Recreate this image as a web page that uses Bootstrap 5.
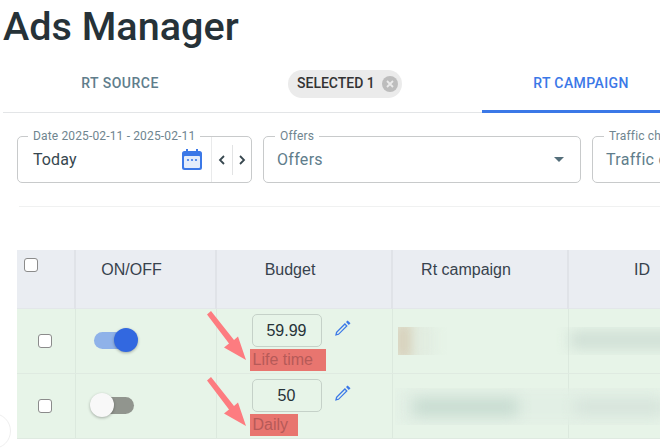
<!DOCTYPE html>
<html lang="en">
<head>
<meta charset="utf-8">
<title>Ads Manager</title>
<link rel="stylesheet" href="https://cdn.jsdelivr.net/npm/bootstrap@5.3.0/dist/css/bootstrap.min.css">
<style>
html,body{height:448px;overflow:hidden;background:#fff}
body{font-family:Roboto,sans-serif;position:relative;width:660px}
.page-title{font-family:Roboto,sans-serif;font-size:39.6px;font-weight:500;line-height:48px;color:#263238;margin:3px 0 0 3px;height:49px}
.tabs-bar{height:60px;margin-left:3px;border-bottom:1px solid #e3e5e7;margin-top:1px;width:700px}
.tab-item{height:60px;font-size:14px;font-weight:500;letter-spacing:.4px;color:#607d8b;flex:none;border-bottom:3px solid transparent;padding-top:3px}
.tab-one{width:234px;letter-spacing:.5px}
.tab-two{width:216px;margin-right:29px;padding-left:51px}
.tab-three{width:198px;color:#3b78e7;border-bottom-color:#3b78e7;margin-bottom:-1px}
.sel-chip{height:28px;width:114px;border-radius:14px;background:#ebebeb;color:#333;padding-left:9px;gap:7px;letter-spacing:0;margin-top:1px}
.sel-chip svg{flex:none}
.filters{padding:23px 0 0 17px;gap:11px;width:800px}
.fld{height:47px;border:1px solid #c8cacb;border-radius:5px;position:relative;flex:none;font-size:16px;letter-spacing:.3px;color:#607d8b;padding-left:13px}
.fld-date{width:235px;color:#37474f;padding-left:15px;letter-spacing:.1px}
.fld-offers{width:318px}
.fld-traffic{width:200px}
.fld-label{position:absolute;top:-8px;left:11px;background:#fff;padding:0 5px;font-size:12px;letter-spacing:.15px;line-height:14px;color:#6f858f;white-space:nowrap}
.fld-date .fld-label{left:10px}
.date-tools{margin-left:auto;height:45px}
.cal-ico{margin-right:9px}
.tool-a{width:21px;height:45px;border-left:1px solid #e9eaeb}
.tool-b{width:19px;height:30px;border-left:1px solid #e2e3e4}
.sel-caret{margin-left:auto;margin-right:16px;width:0;height:0;border-left:5px solid transparent;border-right:5px solid transparent;border-top:5px solid #546e7a}
.rule-line{height:1px;background:#f0f1f1;margin:23px 0 0 19px}
.tbl-wrap{margin:43px 0 0 17px;width:643px;overflow:hidden;position:relative;height:190px}
.data-tbl{table-layout:fixed;width:727px;font-family:"Liberation Sans",Arial,sans-serif;font-size:16px;color:#37424d;margin:0;border-collapse:collapse;--bs-table-bg:transparent}
.data-tbl th{background:#eaedf2;height:58px;vertical-align:top;font-weight:400;text-align:center;padding:8px 28px 0 0;border:0;border-right:2px solid #e0e3e8;border-bottom:1px solid #e3e7ea}
.data-tbl th:first-child{text-align:left;padding:8px 0 0 7px}
.data-tbl td{background:#e7f4e8;height:64px;padding:0;border:0;border-right:1px solid #dce9de;border-bottom:1px solid #dfeae1;vertical-align:middle}
.data-tbl .form-check-input{width:14px;height:14px;margin:0;border:1.5px solid #8b8b8b;border-radius:3px;display:block;float:none;background-color:#fff}
.check-cell .form-check-input{margin-left:21px}
.tgl{position:relative;display:block;width:40px;height:17px;border-radius:9px;margin-left:18px}
.tgl-on{background:#8fb2e9}
.tgl-off{background:#91958e}
.tgl-knob{position:absolute;top:-4px;width:24px;height:24px;border-radius:50%;box-shadow:0 1px 3px rgba(0,0,0,.3)}
.tgl-on .tgl-knob{background:#3268e0;left:20px}
.tgl-off .tgl-knob{background:#f8f8f8;left:-4px}
.budget-cell{position:relative}
.budget-inner{padding:5px 0 0 35px;height:64px;gap:12px}
.amount{width:70px;height:33px;border:1px solid #c5d1c8;border-radius:5px;text-align:center;line-height:31px;color:#263238;flex:none}
.pencil{margin-top:6px;flex:none}
.mode-tag{position:absolute;left:33px;top:40px;height:22px;background:#e8756f;color:#b65a58;line-height:21px;padding-left:3px}
.mode-life{width:76px}
.mode-daily{width:48px}
.arrow-layer{position:absolute;left:190px;top:59px;pointer-events:none}
.smudge{position:absolute;filter:blur(7px)}
.smudge-clip{position:absolute;overflow:hidden}
.edge-circle{position:absolute;left:-25px;top:413px;width:36px;height:36px;border:1px solid #efefef;border-radius:50%;background:#fff}
</style>
</head>
<body>
<h1 class="page-title">Ads Manager</h1>

<div class="tabs-bar d-flex">
  <div class="tab-item tab-one d-flex align-items-center justify-content-center">RT SOURCE</div>
  <div class="tab-item tab-two d-flex align-items-center">
    <div class="sel-chip d-flex align-items-center">
      <span>SELECTED 1</span>
      <svg width="16" height="16" viewBox="0 0 16 16" aria-hidden="true"><circle cx="8" cy="8" r="8" fill="#bdbdbd"/><path d="M5 5l6 6M11 5l-6 6" stroke="#ebebeb" stroke-width="1.8"/></svg>
    </div>
  </div>
  <div class="tab-item tab-three d-flex align-items-center justify-content-center">RT CAMPAIGN</div>
</div>

<div class="filters d-flex">
  <div class="fld fld-date d-flex align-items-center">
    <span class="fld-label">Date 2025-02-11 - 2025-02-11</span>
    <span>Today</span>
    <div class="date-tools d-flex align-items-center">
      <svg class="cal-ico" width="20" height="21" viewBox="0 0 20 21" aria-hidden="true"><path fill="#3b78e7" d="M4 0h2v2h8V0h2v2h1.500A2.500 2.500 0 0 1 20 4.500v14a2.500 2.500 0 0 1-2.500 2.500h-15A2.500 2.500 0 0 1 0 18.500v-14A2.500 2.500 0 0 1 2.500 2H4z"/><rect x="2" y="7" width="16" height="12" rx="1" fill="#e4edfb"/><circle cx="6" cy="11" r="1.100" fill="#3b78e7"/><circle cx="10" cy="11" r="1.100" fill="#3b78e7"/><circle cx="14" cy="11" r="1.100" fill="#3b78e7"/></svg>
      <div class="tool-a d-flex align-items-center justify-content-center"><svg width="8" height="10" viewBox="0 0 8 10" aria-hidden="true"><path d="M6 1L2 5l4 4" fill="none" stroke="#37474f" stroke-width="1.800"/></svg></div>
      <div class="tool-b d-flex align-items-center justify-content-center"><svg width="8" height="10" viewBox="0 0 8 10" aria-hidden="true"><path d="M2 1l4 4-4 4" fill="none" stroke="#37474f" stroke-width="1.800"/></svg></div>
    </div>
  </div>
  <div class="fld fld-offers d-flex align-items-center">
    <span class="fld-label">Offers</span>
    <span>Offers</span>
    <span class="sel-caret"></span>
  </div>
  <div class="fld fld-traffic d-flex align-items-center">
    <span class="fld-label">Traffic channel</span>
    <span>Traffic channel</span>
  </div>
</div>

<div class="rule-line"></div>

<div class="tbl-wrap">
  <table class="table data-tbl">
    <colgroup><col style="width:58px"><col style="width:141px"><col style="width:176px"><col style="width:176px"><col style="width:176px"></colgroup>
    <thead>
      <tr>
        <th><input class="form-check-input" type="checkbox" aria-label="Select all"></th>
        <th>ON/OFF</th>
        <th>Budget</th>
        <th>Rt campaign</th>
        <th>ID</th>
      </tr>
    </thead>
    <tbody>
      <tr>
        <td class="check-cell"><input class="form-check-input" type="checkbox" aria-label="Select row"></td>
        <td><span class="tgl tgl-on"><span class="tgl-knob"></span></span></td>
        <td class="budget-cell">
          <div class="budget-inner d-flex align-items-start">
            <div class="amount">59.99</div>
            <svg class="pencil" width="17" height="16" viewBox="0 0 17 16" aria-hidden="true"><path fill="#3b78e7" d="M13.600.5l2.900 2.700-1.700 1.700-2.800-2.800zM10.900 3.100l2.800 2.800-8.900 8.800-3.700 1 .9-3.800zM3.300 12.600l-.5 1.500 1.500-.4 7.600-7.600-1-1z"/></svg>
          </div>
          <div class="mode-tag mode-life">Life time</div>
        </td>
        <td></td>
        <td></td>
      </tr>
      <tr>
        <td class="check-cell"><input class="form-check-input" type="checkbox" aria-label="Select row"></td>
        <td><span class="tgl tgl-off"><span class="tgl-knob"></span></span></td>
        <td class="budget-cell">
          <div class="budget-inner d-flex align-items-start">
            <div class="amount">50</div>
            <svg class="pencil" width="17" height="16" viewBox="0 0 17 16" aria-hidden="true"><path fill="#3b78e7" d="M13.600.5l2.900 2.700-1.700 1.700-2.800-2.800zM10.900 3.100l2.800 2.800-8.900 8.800-3.700 1 .9-3.800zM3.300 12.600l-.5 1.500 1.500-.4 7.600-7.600-1-1z"/></svg>
          </div>
          <div class="mode-tag mode-daily">Daily</div>
        </td>
        <td></td>
        <td></td>
      </tr>
    </tbody>
  </table>

  <svg class="arrow-layer" width="60" height="125" viewBox="0 0 60 125" aria-hidden="true">
    <g fill="#fd7c80" stroke="none">
      <path d="M0 5.500L4 2 27 31 31 27.500 39 51 17 38.500 22 34.500z"/>
      <path d="M0 71.500L4 68 27 97 31 93.500 39 117 17 104.500 22 100.500z"/>
    </g>
  </svg>

  <div class="smudge-clip" style="left:381px;top:77px;width:262px;height:28px">
    <div class="smudge" style="left:-6px;top:-6px;width:24px;height:40px;background:#d8d2bd"></div>
    <div class="smudge" style="left:18px;top:-6px;width:18px;height:40px;background:#e1ece0"></div>
    <div class="smudge" style="left:172px;top:4px;width:110px;height:18px;background:#cfdfd5"></div>
  </div>
  <div class="smudge-clip" style="left:378px;top:138px;width:265px;height:37px">
    <div class="smudge" style="left:0;top:0;width:265px;height:37px;background:#e2efe5"></div>
    <div class="smudge" style="left:18px;top:10px;width:105px;height:18px;background:#c8dcd1"></div>
    <div class="smudge" style="left:180px;top:12px;width:90px;height:14px;background:#d5e3da"></div>
  </div>
</div>

<div class="edge-circle"></div>
</body>
</html>
